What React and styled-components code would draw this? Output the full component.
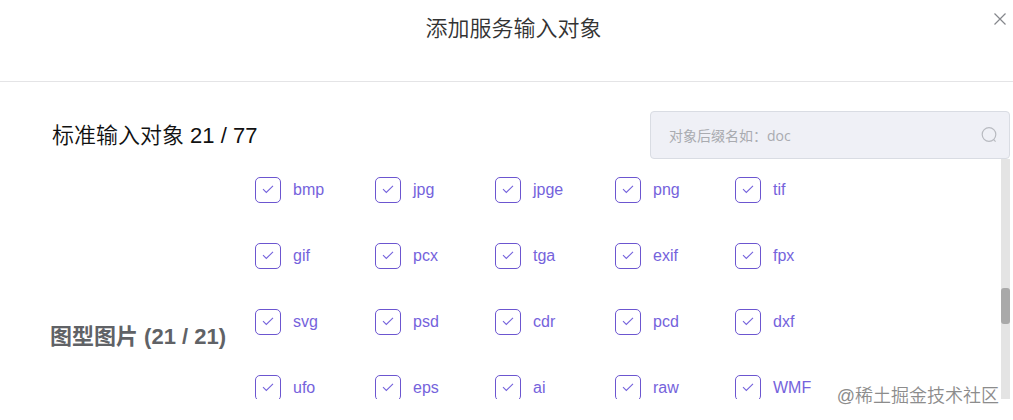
import { useState } from "react";
import styled, { createGlobalStyle } from "styled-components";

const suffixes = [
  "bmp", "jpg", "jpge", "png", "tif",
  "gif", "pcx", "tga", "exif", "fpx",
  "svg", "psd", "cdr", "pcd", "dxf",
  "ufo", "eps", "ai", "raw", "WMF",
];

export default function App() {
  const [keyword, setKeyword] = useState("");
  const [checked, setChecked] = useState(suffixes);

  function onToggle(name) {
    setChecked((list) =>
      list.includes(name) ? list.filter((v) => v !== name) : [...list, name]
    );
  }

  return (
    <>
      <GlobalStyle />
      <DialogBox role="dialog" aria-labelledby="dialogTitle">
        <TitleBar>
          <h1 id="dialogTitle">添加服务输入对象</h1>
          <CloseButton type="button" aria-label="关闭">
            <svg width="14" height="14" viewBox="0 0 14 14">
              <path d="M1.5 1.5 12.5 12.5M12.5 1.5 1.5 12.5" />
            </svg>
          </CloseButton>
        </TitleBar>

        <ToolBar>
          <h2>标准输入对象 21 / 77</h2>
          <SearchBox>
            <input
              type="text"
              aria-label="对象后缀名"
              placeholder="对象后缀名如：doc"
              value={keyword}
              onChange={(e) => setKeyword(e.target.value)}
            />
            <SearchButton type="button" aria-label="搜索">
              <svg width="16" height="16" viewBox="0 0 16 16">
                <circle cx="8" cy="7.5" r="6.8" />
                <path d="M12.4 12.4 14.6 14.6" />
              </svg>
            </SearchButton>
          </SearchBox>
        </ToolBar>

        <ListBox>
          <Group>
            <GroupName>图型图片 (21 / 21)</GroupName>
            <Options>
              {suffixes.map((name) => (
                <Option key={name}>
                  <CheckMark>
                    <input
                      type="checkbox"
                      checked={checked.includes(name)}
                      onChange={() => onToggle(name)}
                    />
                    <svg width="12" height="12" viewBox="0 0 12 12">
                      <path d="M1 5.2 4.3 8.5 11 1.8" />
                    </svg>
                  </CheckMark>
                  {name}
                </Option>
              ))}
            </Options>
          </Group>
          <ScrollTrack>
            <ScrollThumb />
          </ScrollTrack>
        </ListBox>
        <Watermark>@稀土掘金技术社区</Watermark>
      </DialogBox>
    </>
  );
}

const GlobalStyle = createGlobalStyle`
  * {
    box-sizing: border-box;
  }

  body {
    margin: 0;
    background: #fff;
    font-family: "Liberation Sans", "Noto Sans CJK SC", sans-serif;
  }

  h1, h2, h3 {
    margin: 0;
  }

  button {
    display: flex;
    padding: 0;
    border: 0;
    background: none;
    cursor: pointer;
  }
`;

const DialogBox = styled.section`
  position: relative;
  display: flex;
  flex-direction: column;
  height: 100vh;
  padding-bottom: 21px;
  overflow: hidden;
`;

const TitleBar = styled.header`
  display: grid;
  grid-template-columns: 1fr auto 1fr;
  align-items: start;
  padding: 12px 6px 36px 20px;
  border-bottom: 1px solid #e4e4e6;

  h1 {
    grid-column: 2;
    color: #333;
    font-size: 22px;
    font-weight: 350;
    line-height: 33px;
  }
`;

const CloseButton = styled.button`
  justify-self: end;

  svg {
    fill: none;
    stroke: #85878c;
    stroke-width: 1.2;
  }
`;

const ToolBar = styled.div`
  display: flex;
  align-items: center;
  justify-content: space-between;
  padding: 29px 3px 0 52px;

  h2 {
    color: #111;
    font-size: 22px;
    font-weight: 350;
    line-height: 33px;
  }
`;

const SearchBox = styled.div`
  display: flex;
  align-items: center;
  width: 360px;
  height: 48px;
  padding: 0 12px 0 18px;
  border: 1px solid #d9dce3;
  border-radius: 4px;
  background: #eff0f6;

  input {
    flex: 1;
    min-width: 0;
    padding: 0;
    border: 0;
    outline: 0;
    background: none;
    color: #606266;
    font: 14px "Open Sans", "Noto Sans CJK SC", sans-serif;

    &::placeholder {
      color: #a9abb0;
    }
  }
`;

const SearchButton = styled.button`
  svg {
    fill: none;
    stroke: #b8bac0;
    stroke-width: 1.2;
  }
`;

const ListBox = styled.div`
  display: flex;
  flex: 1;
  min-height: 0;
  padding-right: 3px;
  overflow: hidden;
`;

const Group = styled.div`
  display: flex;
  flex: 1;
  align-items: center;
  min-height: 354px;
  padding-left: 50px;
`;

const GroupName = styled.h3`
  width: 205px;
  color: #606266;
  font-size: 22px;
  font-weight: 700;
  line-height: 33px;
`;

const Options = styled.div`
  display: grid;
  grid-template-columns: repeat(5, 120px);
  grid-auto-rows: 66px;
  align-self: flex-start;
  padding-top: 17px;
`;

const Option = styled.label`
  display: flex;
  align-items: center;
  align-self: start;
  gap: 12px;
  color: #7563dc;
  font-size: 16px;
  line-height: 28px;
  cursor: pointer;
`;

const CheckMark = styled.span`
  display: grid;
  place-items: center;

  input,
  svg {
    grid-area: 1 / 1;
  }

  input {
    width: 26px;
    height: 26px;
    margin: 0;
    border: 1px solid #6c56d0;
    border-radius: 5px;
    appearance: none;
    cursor: pointer;
  }

  svg {
    visibility: hidden;
    fill: none;
    stroke: #7563dc;
    stroke-width: 1.1;
    pointer-events: none;
  }

  input:checked + svg {
    visibility: visible;
  }
`;

const ScrollTrack = styled.div`
  width: 9px;
  padding-top: 129px;
  background: #e4e4e4;
`;

const ScrollThumb = styled.div`
  height: 36px;
  border-radius: 3px;
  background: #a9a9a9;
`;

const Watermark = styled.span`
  position: absolute;
  right: 14px;
  bottom: 10px;
  color: #8c8c8c;
  font-size: 18px;
  font-weight: 350;
  line-height: 27px;
`;
